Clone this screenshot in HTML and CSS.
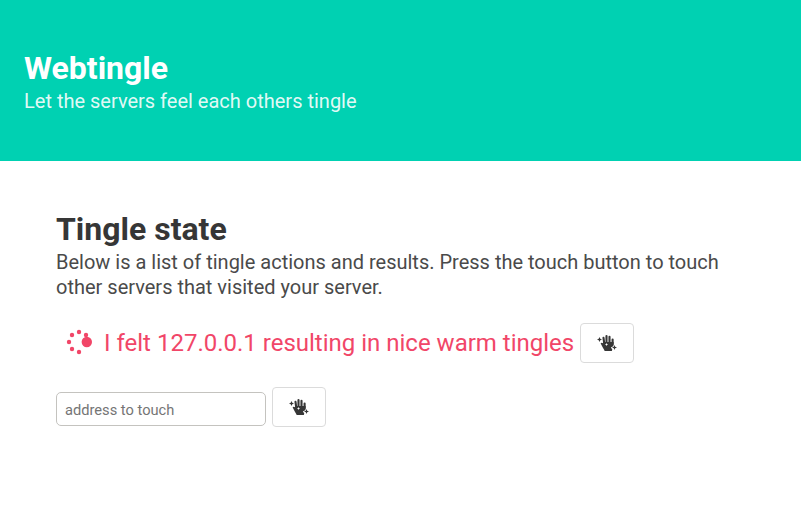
FILE: index.html
```html
<!DOCTYPE html>
<html lang="en">
<head>
<meta charset="utf-8">
<title>Webtingle</title>
<link rel="stylesheet" href="styles.css">
</head>
<body>
<svg class="defs" width="0" height="0" aria-hidden="true">
  <symbol id="hand" viewBox="0 0 20 16">
    <g fill="none" stroke="currentColor" stroke-width="2.1" stroke-linecap="round">
      <path d="M6.5 2.8L7.3 9M9.5 1.1V9M12.5 1.8V9M15.6 4.5V9"/>
    </g>
    <path d="M3.6 8.2C4.4 7.3 5.6 7.6 6.2 8.6V7H16.6V11C16.6 13.3 15.2 14.4 14.8 16H7.7C7 14.2 5 11.5 3.6 8.2Z" fill="currentColor"/>
    <path d="M2.5 2.1L3.3 3.7L5 4.5L3.3 5.3L2.5 6.9L1.7 5.3L0 4.5L1.7 3.7Z" fill="currentColor"/>
    <path d="M9.5 8L10 9L11 9.5L10 10L9.5 11L9 10L8 9.5L9 9Z" fill="#fff"/>
    <path d="M17.5 9.3L18.6 11.6L20 12.5L18.6 13.4L17.5 15.9L15.6 14.7L13.8 12.5L16.2 11.3Z" fill="#fff"/>
    <path d="M17.5 10.1L18.2 11.8L20 12.5L18.2 13.2L17.5 14.9L16.8 13.2L15 12.5L16.8 11.8Z" fill="currentColor"/>
  </symbol>
</svg>
<header class="hero">
  <h1 class="title">Webtingle</h1>
  <p class="subtitle">Let the servers feel each others tingle</p>
</header>
<main class="section">
  <h2 class="title">Tingle state</h2>
  <p class="subtitle">Below is a list of tingle actions and results. Press the touch button to touch other servers that visited your server.</p>
  <div class="tingle">
    <svg class="spinner" viewBox="0 0 26 26" aria-hidden="true">
      <circle cx="20.8" cy="13" r="5.2"/>
      <circle cx="20" cy="6" r="2.2"/>
      <circle cx="13" cy="3" r="2.2"/>
      <circle cx="6" cy="6" r="2.2"/>
      <circle cx="3" cy="13" r="2.2"/>
      <circle cx="6" cy="20" r="2.2"/>
      <circle cx="13" cy="23" r="2.2"/>
    </svg>
    <span class="message">I felt 127.0.0.1 resulting in nice warm tingles</span>
    <button class="button" aria-label="touch"><svg class="hand"><use href="#hand"/></svg></button>
  </div>
  <form class="touch">
    <input class="input" type="text" placeholder="address to touch">
    <button class="button" type="button" aria-label="touch"><svg class="hand"><use href="#hand"/></svg></button>
  </form>
</main>
</body>
</html>
```
FILE: styles.css
```css
* { box-sizing: border-box; }
body {
  margin: 0;
  background: #fff;
  color: #4a4a4a;
  font-family: Roboto, sans-serif;
  font-size: 16px;
}
.defs { display: block; }
.hero { padding: 50px 24px 47px; background: #00d1b2; }
.title {
  margin: 0 0 3px;
  color: #363636;
  font-size: 32px;
  font-weight: 700;
  line-height: 36px;
}
.subtitle { margin: 0; font-size: 20px; line-height: 25px; }
.hero .title { color: #fff; }
.hero .subtitle { color: rgba(255, 255, 255, .9); }
.section { padding: 50px 56px 48px; }
.tingle {
  display: flex;
  align-items: center;
  margin-top: 23px;
  padding-left: 10px;
  color: #f14668;
  font-size: 24px;
}
.spinner { width: 26px; height: 26px; margin-top: -2px; fill: currentColor; }
.message { margin: 0 6px 0 12px; line-height: 36px; white-space: nowrap; }
.button {
  display: flex;
  align-items: center;
  justify-content: center;
  width: 54px;
  height: 40px;
  padding: 0;
  border: 1px solid #dbdbdb;
  border-radius: 4px;
  background: #fff;
  color: #363636;
}
.hand { width: 20px; height: 16px; }
.touch { display: flex; align-items: flex-end; gap: 6px; margin: 24px 0 0; }
.input {
  width: 210px;
  height: 34px;
  margin: 0 0 1px;
  padding: 2px 8px 0;
  border: 1px solid #c4c3bf;
  border-radius: 5px;
  background: #fff;
  color: #363636;
  font: 14.667px Roboto, sans-serif;
}
.input::placeholder { color: #757575; }
```
